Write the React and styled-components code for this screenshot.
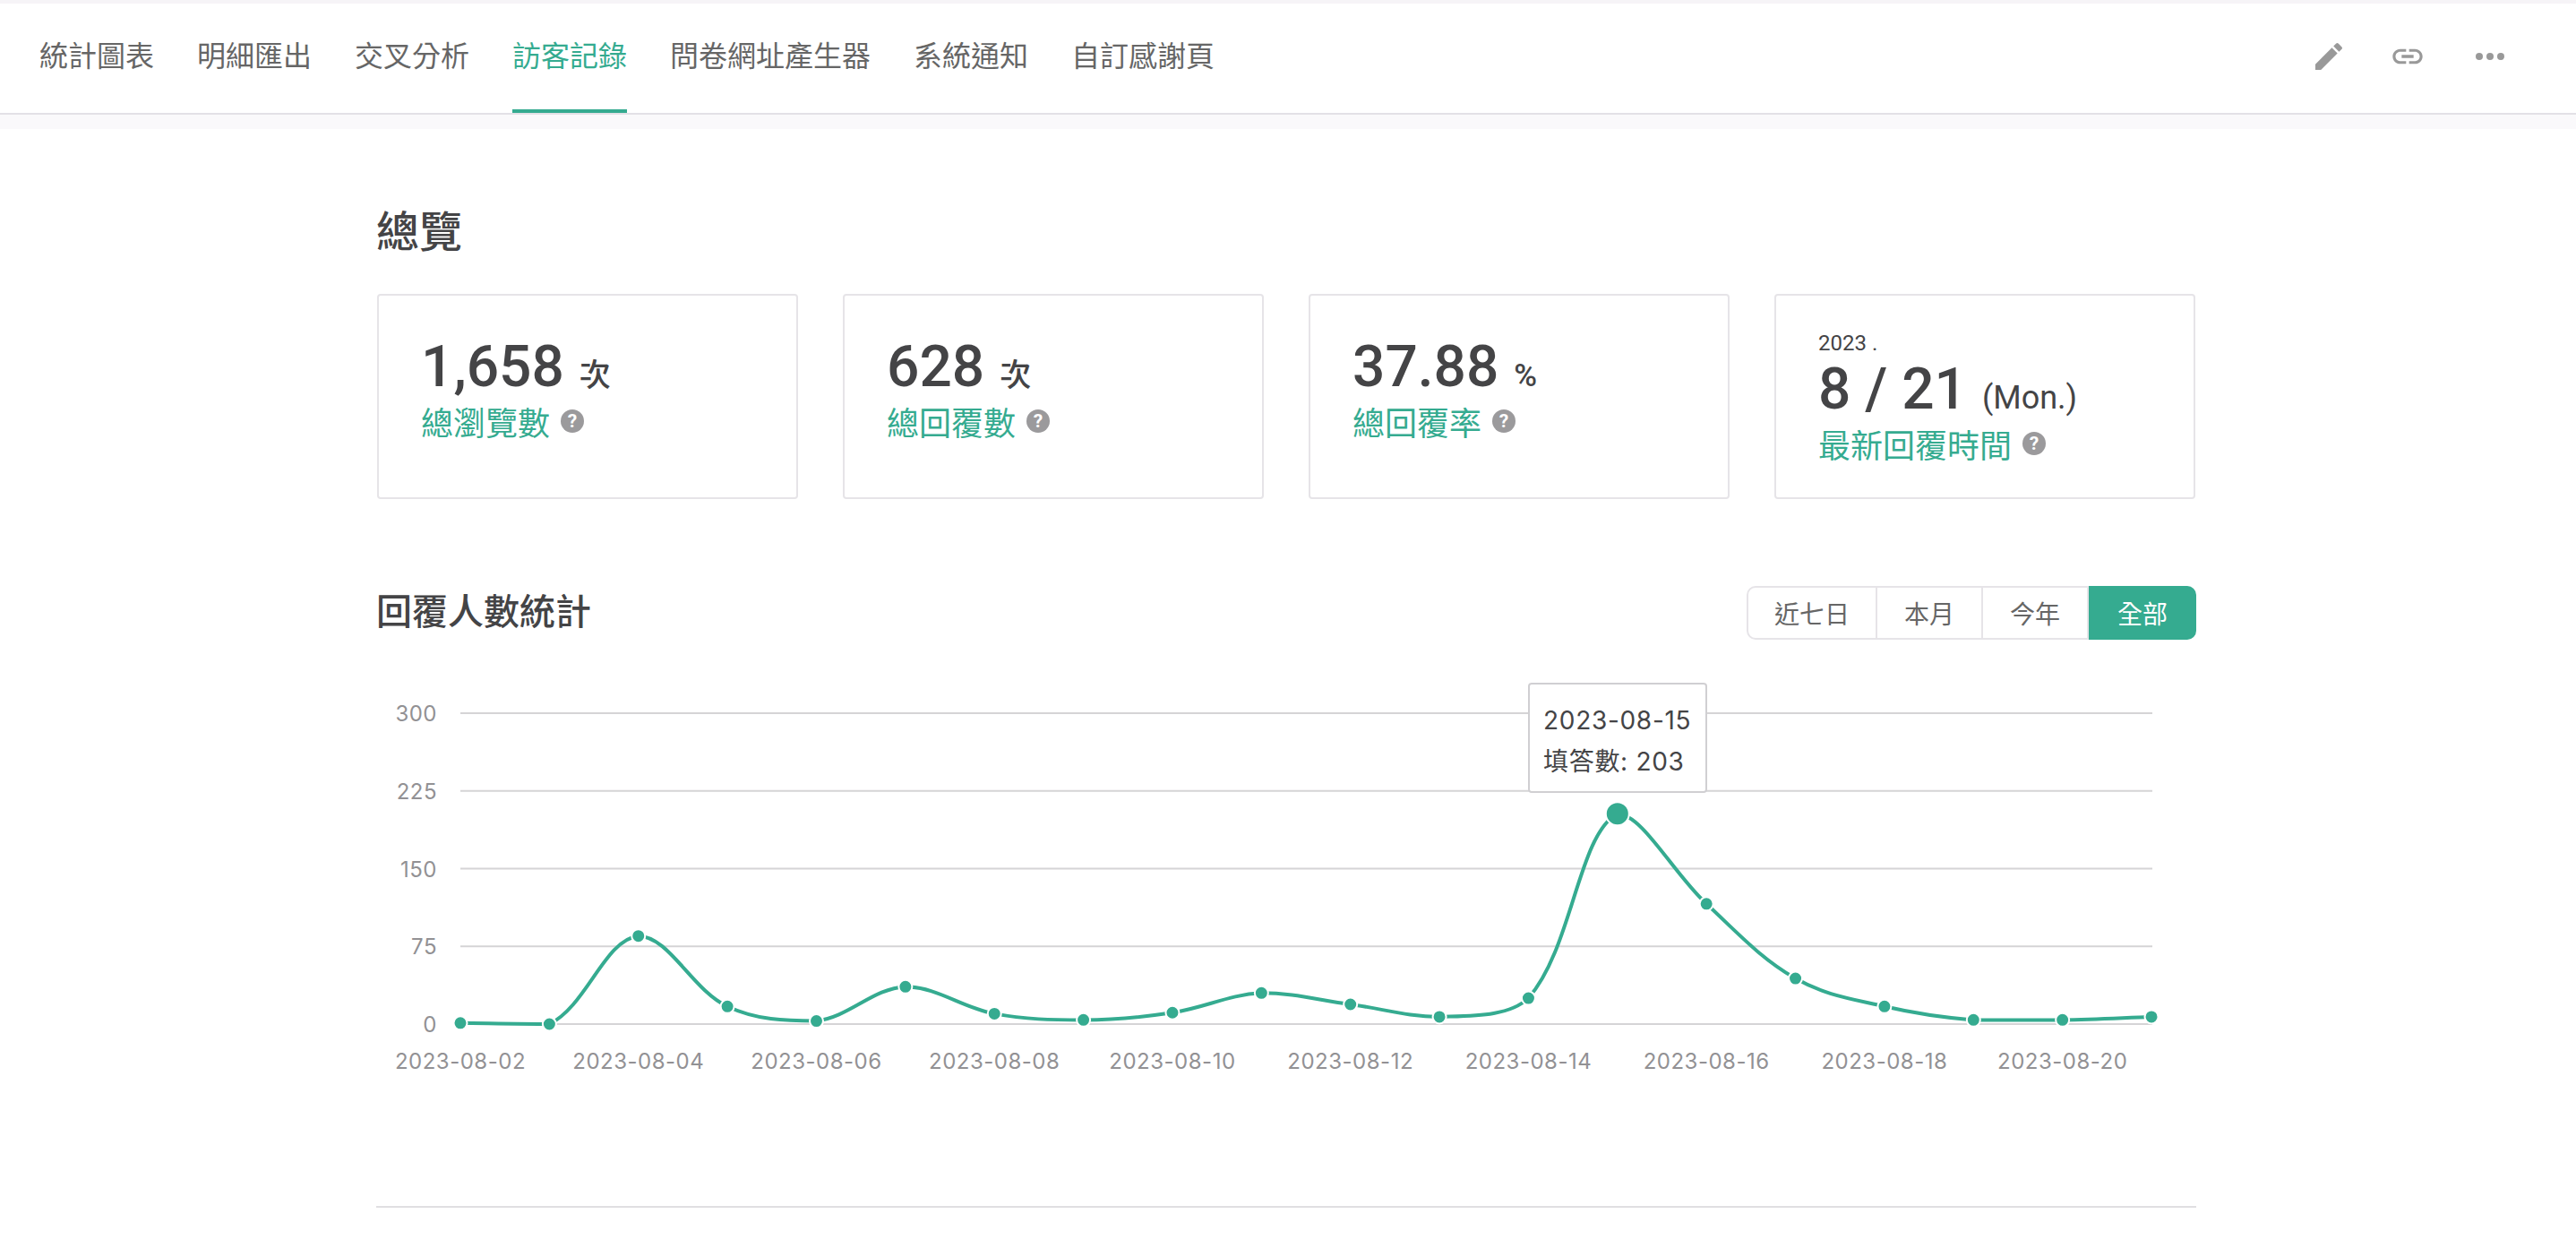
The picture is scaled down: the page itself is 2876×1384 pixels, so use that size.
import React from "react";
import styled, { createGlobalStyle } from "styled-components";
import { MdEdit, MdLink } from "react-icons/md";

const GREEN = "#35ab90";

const tabs = ["統計圖表", "明細匯出", "交叉分析", "訪客記錄", "問卷網址產生器", "系統通知", "自訂感謝頁"];

const stats = [
    { value: "1,658", unit: "次", label: "總瀏覽數" },
    { value: "628", unit: "次", label: "總回覆數" },
    { value: "37.88", unit: "%", label: "總回覆率" },
    { year: "2023 .", value: "8 / 21", unit: "(Mon.)", label: "最新回覆時間" },
];

const ranges = ["近七日", "本月", "今年", "全部"];

const values = [1, 0, 85, 17, 3, 36, 10, 4, 11, 30, 19, 7, 25, 203, 116, 44, 17, 4, 4, 7];
const ticks = [0, 75, 150, 225, 300];

const LEFT = 94;
const STEP = 99.37;
const BASE = 404;
const UNIT = 347 / 300;
const pointX = (i) => LEFT + i * STEP;
const pointY = (v) => BASE - v * UNIT;
const pad = (n) => String(n).padStart(2, "0");

// tangent from the neighbours, control points kept inside the segment's y range
const buildCurve = (pts, smooth = 0.36) => {
    const clamp = (v, a, b) => Math.min(Math.max(v, Math.min(a, b)), Math.max(a, b));
    const tangent = (i) => {
        const p = pts[Math.max(i - 1, 0)];
        const n = pts[Math.min(i + 1, pts.length - 1)];
        const lenPrev = Math.hypot(pts[i][0] - p[0], pts[i][1] - p[1]);
        const lenNext = Math.hypot(n[0] - pts[i][0], n[1] - pts[i][1]);
        const ratio = lenNext / (lenPrev + lenNext || 1);
        return { dx: n[0] - p[0], dy: n[1] - p[1], ratio };
    };
    let d = `M${pts[0][0]} ${pts[0][1]}`;
    for (let i = 0; i < pts.length - 1; i++) {
        const [x0, y0] = pts[i];
        const [x1, y1] = pts[i + 1];
        const a = tangent(i);
        const b = tangent(i + 1);
        const c1x = x0 + a.dx * smooth * a.ratio;
        const c1y = clamp(y0 + a.dy * smooth * a.ratio, y0, y1);
        const c2x = x1 - b.dx * smooth * (1 - b.ratio);
        const c2y = clamp(y1 - b.dy * smooth * (1 - b.ratio), y0, y1);
        d += ` C${c1x.toFixed(1)} ${c1y.toFixed(1)} ${c2x.toFixed(1)} ${c2y.toFixed(1)} ${x1.toFixed(1)} ${y1.toFixed(1)}`;
    }
    return d;
};

const Chart = () => {
    const pts = values.map((v, i) => [pointX(i), pointY(v)]);
    return (
        <ChartWrap>
            <ChartSvg viewBox="0 0 2032 500">
                {ticks.map((t) => (
                    <g key={t}>
                        <line x1={LEFT} x2={1983} y1={pointY(t)} y2={pointY(t)} stroke="#d5d4d6" strokeWidth="2" />
                        <AxisText x={68} y={pointY(t) + 9} textAnchor="end">
                            {t}
                        </AxisText>
                    </g>
                ))}
                {values.map(
                    (v, i) =>
                        i % 2 === 0 && (
                            <AxisText key={i} x={pointX(i)} y={454} textAnchor="middle">
                                {`2023-08-${pad(i + 2)}`}
                            </AxisText>
                        )
                )}
                <path d={buildCurve(pts)} fill="none" stroke={GREEN} strokeWidth="4" />
                {pts.map(([x, y], i) => (
                    <circle key={i} cx={x} cy={y} r={i === 13 ? 13 : 7.5} fill={GREEN} stroke="#fff" strokeWidth="2" />
                ))}
            </ChartSvg>
            <Tooltip>
                <div>2023-08-15</div>
                <div>填答數: 203</div>
            </Tooltip>
        </ChartWrap>
    );
};

const App = () => {
    return (
        <>
            <GlobalStyle />
            <Nav>
                <NavTabs>
                    {tabs.map((t) => (
                        <NavTab key={t} $active={t === "訪客記錄"}>
                            {t}
                        </NavTab>
                    ))}
                </NavTabs>
                <NavIcons>
                    <MdEdit size={40} />
                    <LinkIcon size={40} />
                    <svg width="40" height="40" viewBox="0 0 40 40" fill="currentColor">
                        <circle cx="8" cy="20" r="4" />
                        <circle cx="20" cy="20" r="4" />
                        <circle cx="32" cy="20" r="4" />
                    </svg>
                </NavIcons>
            </Nav>
            <Main>
                <Heading>總覽</Heading>
                <Cards>
                    {stats.map((s) => (
                        <Card key={s.label} $dated={!!s.year}>
                            {s.year && <Year>{s.year}</Year>}
                            <ValueRow>
                                <Value>{s.value}</Value>
                                <Unit $date={!!s.year}>{s.unit}</Unit>
                            </ValueRow>
                            <LabelRow>
                                <Label>{s.label}</Label>
                                <Help>?</Help>
                            </LabelRow>
                        </Card>
                    ))}
                </Cards>
                <SectionHead>
                    <SubHeading>回覆人數統計</SubHeading>
                    <RangeGroup>
                        {ranges.map((r) => (
                            <RangeButton key={r} $active={r === "全部"}>
                                {r}
                            </RangeButton>
                        ))}
                    </RangeGroup>
                </SectionHead>
                <Chart />
                <Divider />
            </Main>
        </>
    );
};

export default App;

const GlobalStyle = createGlobalStyle`
    body {
        margin: 0;
        background: #fff;
        font-family: Roboto, "Noto Sans CJK TC", sans-serif;
        color: #444446;
    }
`;

const Nav = styled.div`
    box-sizing: border-box;
    height: 128px;
    display: flex;
    justify-content: space-between;
    border-top: 4px solid #f6f4f7;
    border-bottom: 2px solid #e3e1e6;
    box-shadow: 0 16px 0 #faf9fb;
`;

const NavTabs = styled.div`
    display: flex;
    gap: 48px;
    padding-left: 44px;
`;

const NavTab = styled.div`
    box-sizing: border-box;
    display: flex;
    align-items: center;
    padding-bottom: 6px;
    font-size: 32px;
    color: ${(p) => (p.$active ? GREEN : "#666")};
    border-bottom: 4px solid ${(p) => (p.$active ? GREEN : "transparent")};
`;

const NavIcons = styled.div`
    display: flex;
    align-items: center;
    gap: 50px;
    padding-right: 76px;
    padding-bottom: 4px;
    color: #999;
`;

const LinkIcon = styled(MdLink)`
    margin: 0 2px 0 -2px;
`;

const Main = styled.div`
    box-sizing: border-box;
    width: 2452px;
    padding: 96px 0 0 420px;
`;

const Heading = styled.h2`
    margin: 0;
    font-size: 48px;
    line-height: 72px;
    font-weight: 500;
`;

const Cards = styled.div`
    display: grid;
    grid-template-columns: repeat(4, 470px);
    gap: 50px;
    margin: 32px 0 0 1px;
`;

const Card = styled.div`
    box-sizing: border-box;
    height: 229px;
    padding: ${(p) => (p.$dated ? "38px" : "45px")} 0 0 47px;
    border: 2px solid #e6e4e8;
    border-radius: 4px;
`;

const Year = styled.div`
    margin-bottom: 2px;
    font-size: 24px;
    line-height: 30px;
`;

const ValueRow = styled.div`
    display: flex;
    align-items: baseline;
    gap: 17px;
    height: 64px;
    line-height: 70px;
`;

const Value = styled.span`
    font-size: 64px;
    font-weight: 500;
`;

const Unit = styled.span`
    font-size: ${(p) => (p.$date ? "36px" : "35px")};
    font-weight: ${(p) => (p.$date ? 400 : 500)};
`;

const LabelRow = styled.div`
    display: flex;
    align-items: center;
    gap: 12px;
    height: 46px;
    margin-top: 8px;
`;

const Label = styled.span`
    font-size: 36px;
    color: ${GREEN};
`;

const Help = styled.span`
    width: 26px;
    height: 26px;
    border-radius: 50%;
    background: #9b9a9c;
    color: #fff;
    font-size: 21px;
    font-weight: 700;
    line-height: 26px;
    text-align: center;
`;

const SectionHead = styled.div`
    display: flex;
    justify-content: space-between;
    align-items: center;
    margin-top: 94px;
`;

const SubHeading = styled.h3`
    margin: 0;
    padding-bottom: 8px;
    font-size: 40px;
    font-weight: 500;
`;

const RangeGroup = styled.div`
    display: flex;
    height: 60px;
`;

const RangeButton = styled.div`
    box-sizing: border-box;
    display: flex;
    align-items: center;
    padding: 0 30px;
    font-size: 28px;
    color: ${(p) => (p.$active ? "#fff" : "#666")};
    background: ${(p) => (p.$active ? GREEN : "#fff")};
    border: 2px solid ${(p) => (p.$active ? GREEN : "#e6e4e8")};
    border-left-width: ${(p) => (p.$active ? "2px" : "0")};

    &:first-child {
        padding: 0 29px;
        border-left-width: 2px;
        border-radius: 10px 0 0 10px;
    }

    &:last-child {
        border-radius: 0 10px 10px 0;
    }
`;

const ChartWrap = styled.div`
    position: relative;
    height: 500px;
    margin-top: 22px;
`;

const ChartSvg = styled.svg`
    display: block;
    width: 2032px;
    height: 500px;
`;

const AxisText = styled.text`
    font-family: Inter, Roboto, sans-serif;
    font-size: 24px;
    letter-spacing: 0.5px;
    fill: #929194;
`;

const Tooltip = styled.div`
    position: absolute;
    left: 1286px;
    top: 23px;
    box-sizing: border-box;
    width: 200px;
    height: 123px;
    padding: 17px 15px;
    background: #fff;
    border: 2px solid #d0cfd2;
    border-radius: 4px;
    font-family: Inter, "Noto Sans CJK TC", sans-serif;
    font-size: 28px;
    letter-spacing: 0.7px;
    line-height: 46px;
    white-space: nowrap;
`;

const Divider = styled.div`
    height: 2px;
    margin-top: 107px;
    background: #e0dfe2;
`;
